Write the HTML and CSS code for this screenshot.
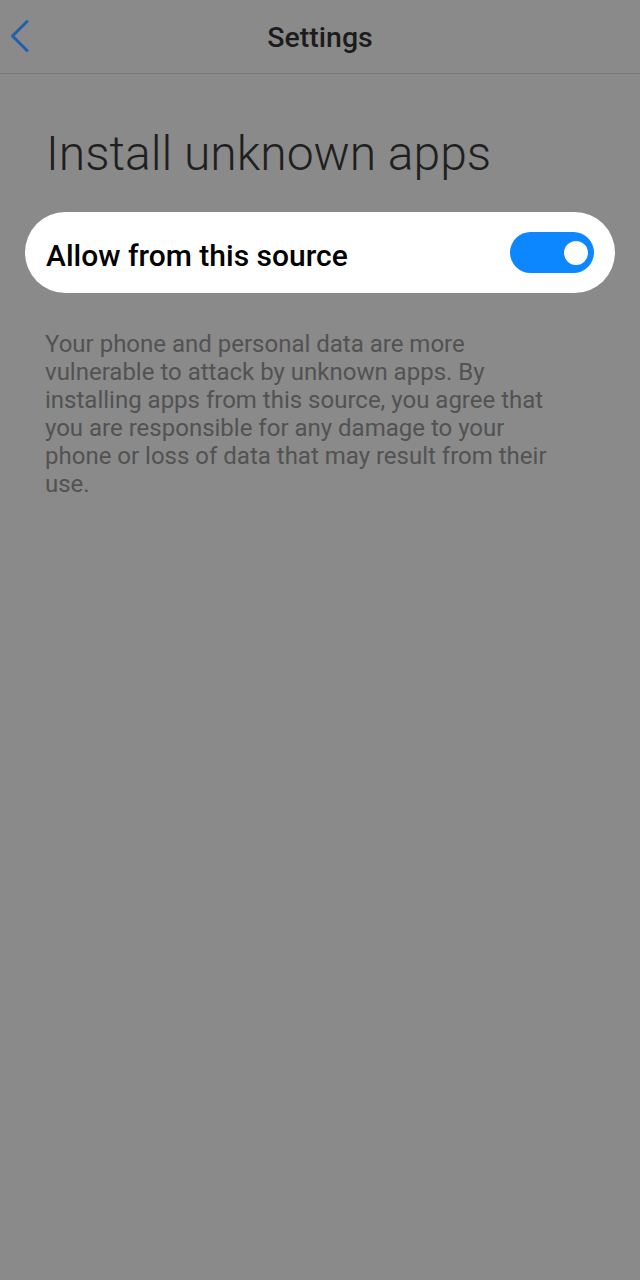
FILE: index.html
```html
<!DOCTYPE html>
<html>
<head>
<meta charset="utf-8">
<link rel="stylesheet" href="styles.css">
</head>
<body>
<div class="screen">
  <header class="topbar">
    <span class="back">
      <svg width="22" height="34" viewBox="0 0 22 34"><path d="M18 2.5 L3.5 17 L18 31.5" fill="none" stroke="#1f5fad" stroke-width="3" stroke-linecap="round" stroke-linejoin="round"/></svg>
    </span>
    <h1 class="topbar-title">Settings</h1>
  </header>
  <main class="content">
    <h2 class="page-title">Install unknown apps</h2>
    <div class="card">
      <span class="card-label">Allow from this source</span>
      <span class="toggle"><span class="knob"></span></span>
    </div>
    <p class="desc">Your phone and personal data are more vulnerable to attack by unknown apps. By installing apps from this source, you agree that you are responsible for any damage to your phone or loss of data that may result from their use.</p>
  </main>
</div>
</body>
</html>
```
FILE: styles.css
```css
html, body {
  margin: 0;
  padding: 0;
  background: #8a8a8a;
}
.screen {
  width: 640px;
  min-height: 1280px;
  background: #8a8a8a;
  font-family: Roboto, "Liberation Sans", sans-serif;
}
.topbar {
  position: relative;
  height: 74px;
  border-bottom: 1px solid #777777;
  display: flex;
  align-items: center;
  justify-content: center;
  box-sizing: border-box;
  padding-top: 3px;
}
.back {
  position: absolute;
  left: 9px;
  top: 19px;
  width: 22px;
  height: 34px;
}
.back svg { display: block; }
.topbar-title {
  margin: 0;
  font-size: 28.5px;
  font-weight: 500;
  color: #1c1c1c;
  line-height: 1;
}
.content {
  padding: 0 25px 0 25px;
}
.page-title {
  margin: 0;
  padding: 50px 0 0 21px;
  font-size: 48px;
  font-weight: 300;
  color: #1f1f1f;
  line-height: 60px;
}
.card {
  margin-top: 28px;
  height: 81px;
  background: #ffffff;
  border-radius: 41px;
  display: flex;
  align-items: center;
  justify-content: space-between;
  padding: 0 21px;
  box-sizing: border-box;
}
.card-label {
  font-size: 30px;
  font-weight: 500;
  color: #000000;
  padding-top: 5px;
}
.toggle {
  width: 84px;
  height: 41px;
  border-radius: 21px;
  background: #0d87ff;
  display: flex;
  align-items: center;
  justify-content: flex-end;
  padding-right: 6px;
  box-sizing: border-box;
}
.knob {
  width: 24px;
  height: 24px;
  border-radius: 50%;
  background: #ffffff;
}
.desc {
  margin: 37px 0 0 20px;
  width: 514px;
  font-size: 24px;
  line-height: 28px;
  color: #525252;
}
```
